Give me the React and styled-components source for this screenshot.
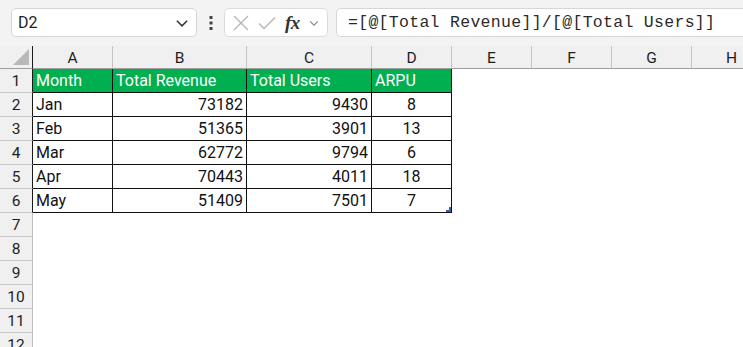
import React from "react";
import styled, { createGlobalStyle } from "styled-components";

const Global = createGlobalStyle`
  html, body { margin: 0; padding: 0; background: #fff; overflow: hidden; }
  body { width: 743px; height: 347px; font-family: Roboto, "Noto Sans", sans-serif; }
`;

const Page = styled.div`
  width: 743px;
  height: 347px;
  overflow: hidden;
  display: flex;
  flex-direction: column;
  background: #fff;
`;

const Toolbar = styled.div`
  height: 46px;
  box-sizing: border-box;
  padding: 8px 0 9px 11px;
  background: #f3f3f3;
  display: flex;
  align-items: stretch;
  flex-shrink: 0;
  & > * { flex-shrink: 0; }
`;

const NameBox = styled.div`
  width: 186px;
  box-sizing: border-box;
  background: #fff;
  border: 1px solid #d6d6d6;
  border-radius: 5px;
  display: flex;
  align-items: center;
  justify-content: space-between;
  padding: 0 6px 0 6px;
  font-size: 16px;
  color: #1e1e1e;
`;

const Dots = styled.div`
  width: 27px;
  display: flex;
  align-items: center;
  justify-content: center;
`;

const FxBox = styled.div`
  width: 104px;
  box-sizing: border-box;
  background: #fff;
  border: 1px solid #dcdcdc;
  border-radius: 5px;
  display: flex;
  align-items: center;
  padding-left: 6px;
  gap: 6px;
`;

const FxLabel = styled.span`
  font-family: "Liberation Serif", "DejaVu Serif", serif;
  font-style: italic;
  font-weight: bold;
  font-size: 19px;
  color: #333;
  margin-left: 2px;
  margin-right: 2px;
  letter-spacing: -0.5px;
`;

const FormulaInput = styled.div`
  margin-left: 8px;
  width: 440px;
  box-sizing: border-box;
  background: #fff;
  border: 1px solid #d6d6d6;
  border-right: none;
  border-radius: 5px 0 0 5px;
  display: flex;
  align-items: center;
  padding-left: 11px;
  font-family: "Liberation Mono", "DejaVu Sans Mono", monospace;
  font-size: 16.5px;
  letter-spacing: 0.3px;
  color: #2a2a2a;
  white-space: nowrap;
`;

const Grid = styled.div`
  display: grid;
  grid-template-columns: 33px 80px 134px 125px 80px 80px 80px 80px 80px;
  grid-auto-rows: 24px;
  grid-template-rows: 23px;
  width: 772px;
`;

const Corner = styled.div`
  background: #f0f0f0;
  box-sizing: border-box;
  border-bottom: 1px solid #9e9e9e;
  border-right: 1px solid #1a1a1a;
  position: relative;
  &::after {
    content: "";
    position: absolute;
    right: 3px;
    bottom: 3px;
    width: 16px;
    height: 16px;
    background: #b9b9b9;
    clip-path: polygon(100% 0, 100% 100%, 0 100%);
  }
`;

const ColHead = styled.div`
  background: #f0f0f0;
  box-sizing: border-box;
  border-bottom: 1px solid #9e9e9e;
  border-right: 1px solid #c4c4c4;
  display: flex;
  align-items: center;
  justify-content: center;
  font-size: 15.5px;
  color: #1e1e1e;
  padding-top: 2px;
`;

const RowHead = styled.div`
  background: #f0f0f0;
  box-sizing: border-box;
  border-bottom: 1px solid #c6c6c6;
  border-right: 1px solid ${(p) => (p.$dark ? "#1a1a1a" : "#bdbdbd")};
  display: flex;
  align-items: center;
  justify-content: center;
  font-size: 15.5px;
  color: #1e1e1e;
`;

const Cell = styled.div`
  box-sizing: border-box;
  position: relative;
  display: flex;
  align-items: center;
  padding: 0 3px;
  font-size: 16px;
  white-space: nowrap;
  justify-content: ${(p) =>
    p.$align === "right" ? "flex-end" : p.$align === "center" ? "center" : "flex-start"};
  background: ${(p) => (p.$head ? "#00b050" : "#fff")};
  color: ${(p) => (p.$head ? "#fff" : "#111")};
  border-right: ${(p) => (p.$table ? "1px solid #111" : "none")};
  border-bottom: ${(p) => (p.$table ? "1px solid #111" : "none")};
`;

const Handle = styled.span`
  position: absolute;
  right: 0;
  bottom: 0;
  width: 5px;
  height: 5px;
  background: #3f5cb3;
  clip-path: polygon(100% 0, 100% 100%, 0 100%, 0 60%, 60% 60%, 60% 0);
`;

const Chevron = ({ size = 14, color = "#444" }) => (
  <svg width={size} height={size} viewBox="0 0 14 14">
    <path d="M2.5 5 L7 9.5 L11.5 5" fill="none" stroke={color} strokeWidth="1.3" />
  </svg>
);

const cols = ["A", "B", "C", "D", "E", "F", "G", "H"];
const data = [
  ["Jan", 73182, 9430, 8],
  ["Feb", 51365, 3901, 13],
  ["Mar", 62772, 9794, 6],
  ["Apr", 70443, 4011, 18],
  ["May", 51409, 7501, 7],
];

export default function App() {
  const rows = [];
  for (let r = 1; r <= 12; r++) {
    const inTable = r <= 6;
    rows.push(
      <RowHead key={`rh${r}`} $dark={inTable}>
        {r}
      </RowHead>
    );
    for (let c = 0; c < 8; c++) {
      let content = "";
      let align = "left";
      const table = inTable && c < 4;
      if (r === 1 && c < 4) {
        content = ["Month", "Total Revenue", "Total Users", "ARPU"][c];
      } else if (table) {
        const v = data[r - 2][c];
        content = v;
        align = c === 0 ? "left" : c === 3 ? "center" : "right";
      }
      rows.push(
        <Cell key={`c${r}-${c}`} $table={table} $head={r === 1 && c < 4} $align={align}>
          {content}
          {r === 6 && c === 3 && <Handle />}
        </Cell>
      );
    }
  }

  return (
    <Page>
      <Global />
      <Toolbar>
        <NameBox>
          <span>D2</span>
          <Chevron size={16} color="#333" />
        </NameBox>
        <Dots>
          <svg width="4" height="16" viewBox="0 0 4 16">
            <rect x="0.5" y="1" width="3" height="3" fill="#444" />
            <rect x="0.5" y="6.5" width="3" height="3" fill="#444" />
            <rect x="0.5" y="12" width="3" height="3" fill="#444" />
          </svg>
        </Dots>
        <FxBox>
          <svg width="20" height="20" viewBox="0 0 20 20">
            <path d="M3 3 L17 17 M17 3 L3 17" stroke="#b4b4b4" strokeWidth="1.3" fill="none" />
          </svg>
          <svg width="20" height="20" viewBox="0 0 20 20">
            <path d="M2 10.5 L7 15.5 L18 4.5" stroke="#b4b4b4" strokeWidth="1.3" fill="none" />
          </svg>
          <FxLabel>fx</FxLabel>
          <Chevron size={12} color="#888" />
        </FxBox>
        <FormulaInput>=[@[Total Revenue]]/[@[Total Users]]</FormulaInput>
      </Toolbar>
      <Grid>
        <Corner />
        {cols.map((c) => (
          <ColHead key={c}>{c}</ColHead>
        ))}
        {rows}
      </Grid>
    </Page>
  );
}
